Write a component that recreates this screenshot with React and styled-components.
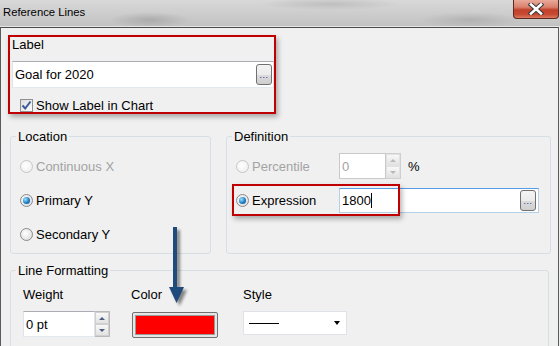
import React from 'react';
import styled, { createGlobalStyle } from 'styled-components';

const GlobalStyle = createGlobalStyle`
  html, body { margin: 0; padding: 0; background: #f0f0f0; }
  * { box-sizing: border-box; }
`;

const Window = styled.div`
  position: relative;
  width: 560px;
  height: 346px;
  overflow: hidden;
  background: #f0f0f0;
  font-family: "Liberation Sans", Arial, sans-serif;
  font-size: 13px;
  color: #000;
`;

const TitleBar = styled.div`
  height: 27px;
  display: flex;
  justify-content: space-between;
  align-items: flex-start;
  background:
    radial-gradient(ellipse 40px 8px at 150px 20px, rgba(120, 120, 120, 0.35), transparent),
    radial-gradient(ellipse 50px 8px at 470px 20px, rgba(130, 130, 130, 0.3), transparent),
    radial-gradient(ellipse 70px 6px at 330px 4px, rgba(140, 140, 140, 0.3), transparent),
    linear-gradient(to bottom, #d8d8d8 0%, #cbcbcb 60%, #c2c2c2 100%);
  border-bottom: 1px solid #e6e6e6;
`;

const Title = styled.div`
  padding: 6px 0 0 3px;
  font-size: 11.3px;
  color: #000;
`;

const CloseButton = styled.div`
  width: 46px;
  height: 19px;
  margin-right: 1px;
  border: 1px solid #5d2a22;
  border-top: none;
  border-radius: 0 0 4px 4px;
  background: linear-gradient(
    to bottom,
    #e9a99a 0%,
    #d9806c 40%,
    #c2402a 55%,
    #c84a32 80%,
    #dc7a60 100%
  );
  display: flex;
  align-items: center;
  justify-content: center;
`;

const Body = styled.div`
  height: 319px;
  border-top: 1px solid #4a4a4a;
  border-left: 1px solid #5a5a5a;
  border-right: 1px solid #5a5a5a;
  margin-right: 1px;
  padding-top: 7px;
`;

const LabelBox = styled.div`
  width: 268px;
  height: 79px;
  margin-left: 7px;
  padding-left: 2px;
  border: 2px solid #c00000;
  box-shadow: 2px 3px 5px rgba(0, 0, 0, 0.3);
`;

const Caption = styled.div`
  line-height: 15px;
  color: ${(p) => (p.$disabled ? '#a3a3a3' : '#000')};
  white-space: nowrap;
`;

const TextField = styled.div`
  position: relative;
  display: flex;
  align-items: center;
  width: ${(p) => p.$width}px;
  height: ${(p) => p.$height}px;
  margin-top: ${(p) => p.$top || 0}px;
  padding-left: 2px;
  background: #fff;
  border: 1px solid;
  border-color: ${(p) =>
    p.$focused
      ? '#569de5 #b5cfe7 #b5cfe7 #b5cfe7'
      : p.$disabled
      ? '#c9c9c9'
      : '#abadb3 #e2e3ea #e3e9ef #e2e3ea'};
  color: ${(p) => (p.$disabled ? '#a3a3a3' : '#000')};
  line-height: 15px;
`;

const Caret = styled.span`
  display: inline-block;
  width: 1px;
  height: 15px;
  background: #000;
  vertical-align: middle;
`;

const DotsButton = styled.div`
  position: absolute;
  right: ${(p) => p.$right}px;
  top: ${(p) => p.$top}px;
  width: 16px;
  height: 21px;
  border: 1px solid #707070;
  border-radius: 3px;
  background: linear-gradient(to bottom, #f4f4f4 0%, #ebebeb 50%, #dcdcdc 51%, #cfcfcf 100%);
  font-size: 9px;
  line-height: 9px;
  letter-spacing: 0.5px;
  color: #2b2b8a;
  display: flex;
  align-items: flex-end;
  justify-content: center;
  padding-bottom: 4px;
`;

const CheckRow = styled.div`
  display: flex;
  align-items: center;
  gap: 3px;
  margin: 10px 0 0 8px;
  line-height: 15px;
`;

const CheckBox = styled.div`
  width: 13px;
  height: 13px;
  border: 1px solid #8e8f8f;
  background: linear-gradient(135deg, #dcdcdc, #fdfdfd);
  display: flex;
  align-items: center;
  justify-content: center;
`;

const GroupRow = styled.div`
  display: flex;
  gap: 15px;
  margin: 22px 0 0 9px;
`;

const Group = styled.div`
  width: ${(p) => p.$width}px;
  height: ${(p) => p.$height}px;
  margin: ${(p) => p.$margin || 0};
  border: 1px solid #d5dfe5;
  border-radius: 3px;
`;

const Legend = styled.div`
  display: table;
  margin: -8px 0 0 5px;
  padding: 0 2px;
  line-height: 15px;
  background: #f0f0f0;
`;

const Rows = styled.div`
  padding: 5px 0 0 9px;
`;

const Row = styled.div`
  position: relative;
  height: 34px;
  display: flex;
  align-items: center;
`;

const RadioLabel = styled.div`
  display: flex;
  align-items: center;
  gap: 3px;
  width: ${(p) => (p.$width ? `${p.$width}px` : 'auto')};
  color: ${(p) => (p.$disabled ? '#a3a3a3' : '#000')};
  line-height: 15px;
`;

const RadioCircle = styled.div`
  width: 13px;
  height: 13px;
  border-radius: 50%;
  border: 1px solid ${(p) => (p.$disabled ? '#c6c6c6' : '#8a8a8a')};
  background: radial-gradient(circle at 40% 40%, #ffffff, ${(p) => (p.$disabled ? '#ececec' : '#d6d6d6')});
  display: flex;
  align-items: center;
  justify-content: center;
`;

const RadioDot = styled.div`
  width: 7px;
  height: 7px;
  border-radius: 50%;
  background: radial-gradient(circle at 35% 35%, #9fe2ff, #1a7fc6 55%, #0d3f7a);
`;

const Spinner = styled.div`
  display: flex;
  flex-direction: column;
  width: 15px;
  height: ${(p) => p.$height}px;
  border: 1px solid ${(p) => (p.$disabled ? '#cfcfcf' : '#b9b9b9')};
  border-left: none;
  background: #f0f0f0;
`;

const SpinHalf = styled.div`
  flex: 1;
  display: flex;
  align-items: center;
  justify-content: center;
  border: 1px solid ${(p) => (p.$disabled ? '#e2e2e2' : '#d0d0d0')};
  background: linear-gradient(to bottom, #f8f8f8, #e2e2e2);
  &::after {
    content: '';
    border-left: 3px solid transparent;
    border-right: 3px solid transparent;
    ${(p) => (p.$down ? 'border-top' : 'border-bottom')}: 3px solid ${(p) =>
      p.$disabled ? '#b8b8b8' : '#4b5e82'};
  }
`;

const SpinBox = styled.div`
  display: flex;
  margin-top: ${(p) => p.$top || 0}px;
`;

const Percent = styled.span`
  margin-left: 7px;
`;

const Highlight = styled.div`
  position: absolute;
  left: ${(p) => p.$left}px;
  top: ${(p) => p.$top}px;
  width: ${(p) => p.$width}px;
  height: ${(p) => p.$height}px;
  border: 2px solid #c00000;
  box-shadow: 2px 3px 5px rgba(0, 0, 0, 0.3);
  pointer-events: none;
`;

const Fields = styled.div`
  display: grid;
  grid-template-columns: 108px 112px auto;
  padding: 9px 0 0 12px;
`;

const Field = styled.div`
  display: flex;
  flex-direction: column;
`;

const Swatch = styled.div`
  width: 86px;
  height: 26px;
  margin: 10px 0 0 1px;
  padding: 2px;
  border: 1px solid #707070;
  border-radius: 2px;
  background: #e6e6e6;
`;

const SwatchFill = styled.div`
  height: 100%;
  background: #ff0000;
  border: 1px solid #9a9a9a;
`;

const Dropdown = styled.div`
  width: 104px;
  height: 24px;
  margin-top: 9px;
  padding: 0 5px;
  border: 1px solid #dfe3e8;
  background: #fff;
  display: flex;
  align-items: center;
  justify-content: space-between;
`;

const LineSample = styled.div`
  width: 30px;
  height: 1px;
  background: #000;
`;

const DropArrow = styled.div`
  margin-right: 1px;
  border-left: 3.5px solid transparent;
  border-right: 3.5px solid transparent;
  border-top: 4px solid #000;
`;

const ArrowOverlay = styled.svg`
  position: absolute;
  left: 164px;
  top: 224px;
  overflow: visible;
`;

const Radio = ({ checked, disabled, width, children }) => (
  <RadioLabel $width={width} $disabled={disabled}>
    <RadioCircle $disabled={disabled}>{checked && <RadioDot />}</RadioCircle>
    {children}
  </RadioLabel>
);

const Spin = ({ height, disabled }) => (
  <Spinner $height={height} $disabled={disabled}>
    <SpinHalf $disabled={disabled} />
    <SpinHalf $disabled={disabled} $down />
  </Spinner>
);

export default function App() {
  return (
    <>
      <GlobalStyle />
      <Window>
        <TitleBar>
          <Title>Reference Lines</Title>
          <CloseButton>
            <svg width="16" height="12" viewBox="0 0 16 12">
              <path d="M3 1.5 L13 10.5 M13 1.5 L3 10.5" stroke="#3a3a3a" strokeWidth="4.6" strokeLinecap="square" />
              <path d="M3 1.5 L13 10.5 M13 1.5 L3 10.5" stroke="#ffffff" strokeWidth="2.6" strokeLinecap="square" />
            </svg>
          </CloseButton>
        </TitleBar>
        <Body>
          <LabelBox>
            <Caption>Label</Caption>
            <TextField $width={262} $height={27} $top={9}>
              Goal for 2020
              <DotsButton $right={1} $top={2}>...</DotsButton>
            </TextField>
            <CheckRow>
              <CheckBox>
                <svg width="11" height="11" viewBox="0 0 11 11">
                  <path d="M1.5 5.5 L4.2 8.5 L9.5 1.5" fill="none" stroke="#3c5a9a" strokeWidth="2" />
                </svg>
              </CheckBox>
              Show Label in Chart
            </CheckRow>
          </LabelBox>

          <GroupRow>
            <Group $width={201} $height={118}>
              <Legend>Location</Legend>
              <Rows>
                <Row>
                  <Radio disabled>Continuous X</Radio>
                </Row>
                <Row>
                  <Radio checked>Primary Y</Radio>
                </Row>
                <Row>
                  <Radio>Secondary Y</Radio>
                </Row>
              </Rows>
            </Group>
            <Group $width={325} $height={118}>
              <Legend>Definition</Legend>
              <Rows>
                <Row>
                  <Radio disabled width={103}>Percentile</Radio>
                  <SpinBox>
                    <TextField $width={47} $height={26} $disabled>
                      0
                    </TextField>
                    <Spin height={26} disabled />
                  </SpinBox>
                  <Percent>%</Percent>
                </Row>
                <Row>
                  <Radio checked width={103}>Expression</Radio>
                  <TextField $width={200} $height={25} $focused>
                    1800
                    <Caret />
                    <DotsButton $right={2} $top={1}>...</DotsButton>
                  </TextField>
                  <Highlight $left={-4} $top={1} $width={168} $height={32} />
                </Row>
              </Rows>
            </Group>
          </GroupRow>

          <Group $width={539} $height={90} $margin="16px 0 0 9px">
            <Legend>Line Formatting</Legend>
            <Fields>
              <Field>
                <Caption>Weight</Caption>
                <SpinBox $top={9}>
                  <TextField $width={72} $height={26}>
                    0 pt
                  </TextField>
                  <Spin height={26} />
                </SpinBox>
              </Field>
              <Field>
                <Caption>Color</Caption>
                <Swatch>
                  <SwatchFill />
                </Swatch>
              </Field>
              <Field>
                <Caption>Style</Caption>
                <Dropdown>
                  <LineSample />
                  <DropArrow />
                </Dropdown>
              </Field>
            </Fields>
          </Group>
        </Body>

        <ArrowOverlay width="30" height="85" viewBox="0 0 30 85">
          <defs>
            <filter id="arrowShadow" x="-50%" y="-20%" width="200%" height="140%">
              <feGaussianBlur stdDeviation="1.6" />
            </filter>
          </defs>
          <g transform="translate(3 3)" opacity="0.45" filter="url(#arrowShadow)">
            <rect x="9" y="3" width="4" height="62" fill="#000" />
            <path d="M5 63 L20 63 L12.5 79 Z" fill="#000" />
          </g>
          <rect x="9" y="3" width="4" height="62" fill="#1f4b7c" />
          <path d="M5 63 L20 63 L12.5 79 Z" fill="#1f4b7c" />
        </ArrowOverlay>
      </Window>
    </>
  );
}
